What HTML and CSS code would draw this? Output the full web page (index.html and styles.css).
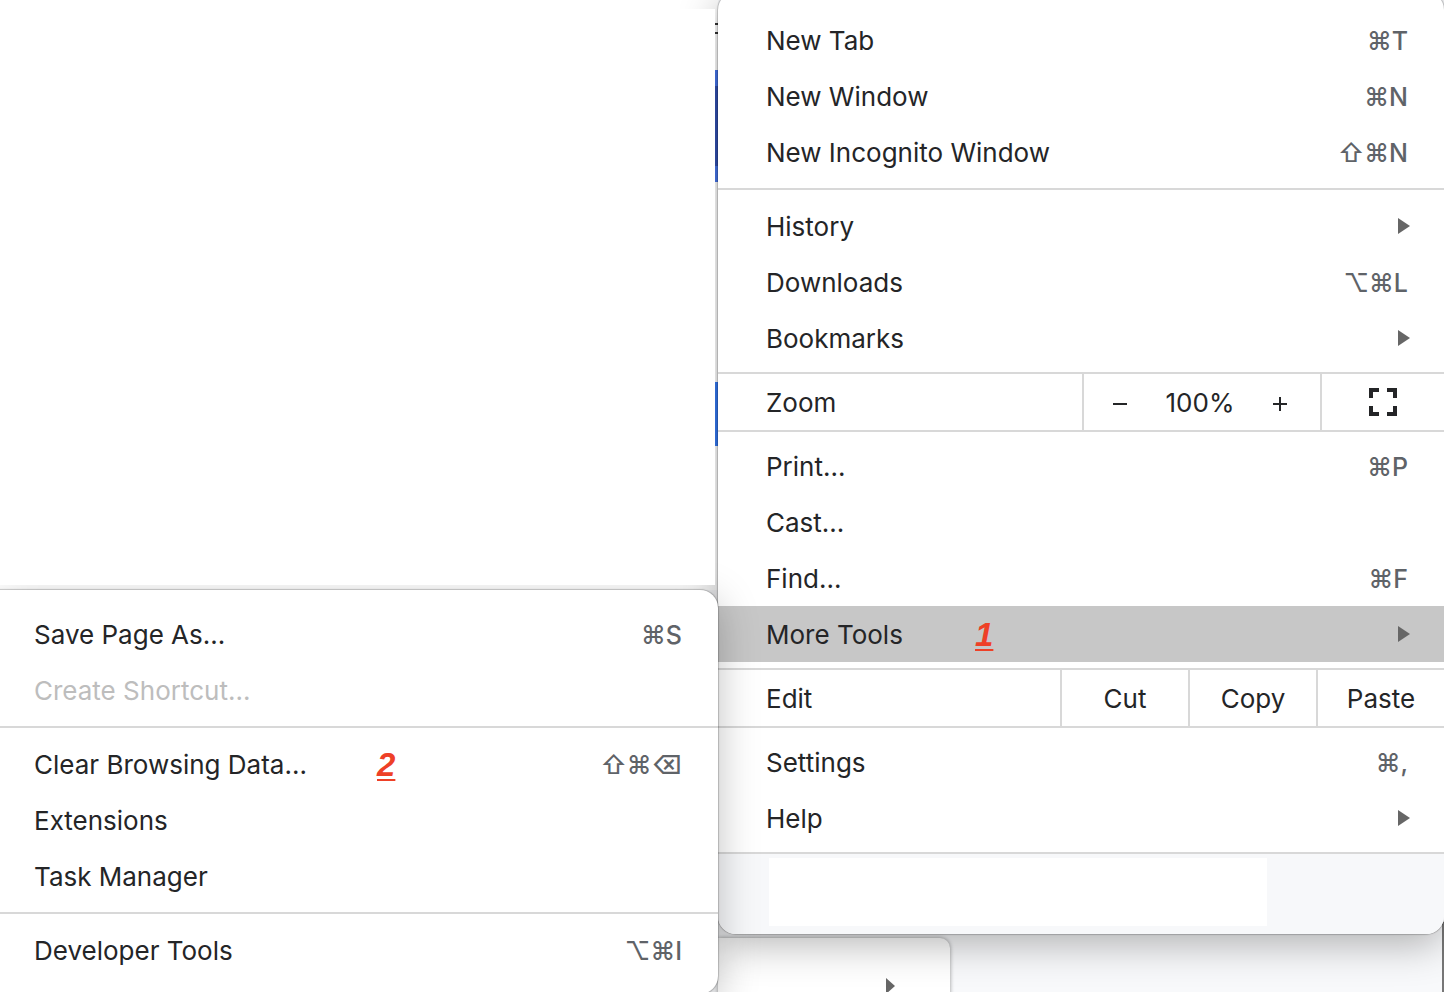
FILE: index.html
```html
<!DOCTYPE html>
<html lang="en">
<head>
  <meta charset="UTF-8">
  <title>Clear Browsing Data</title>
  <meta name="viewport" content="width=device-width, initial-scale=1.0">
  <link rel="stylesheet" href="styles.css">
</head>
<body>

  <div class="page">
    <div class="left">
      <div class="backdrop">
        <div class="blank"></div>
        <div class="edge"></div>
      </div>

      <div class="menu submenu" role="menu" aria-label="More Tools">
        <button class="item" type="button">Save Page As... <span class="keys">⌘S</span></button>
        <button class="item" type="button" disabled>Create Shortcut...</button>
        <hr class="line">
        <button class="item" type="button">Clear Browsing Data... <span class="step step-two">2</span> <span class="keys">⇧⌘⌫</span></button>
        <button class="item" type="button">Extensions</button>
        <button class="item" type="button">Task Manager</button>
        <hr class="line">
        <button class="item" type="button">Developer Tools <span class="keys">⌥⌘I</span></button>
      </div>
    </div>

    <div class="right">
      <div class="menu main-menu" role="menu" aria-label="Browser menu">
        <button class="item" type="button">New Tab <span class="keys">⌘T</span></button>
        <button class="item" type="button">New Window <span class="keys">⌘N</span></button>
        <button class="item" type="button">New Incognito Window <span class="keys">⇧⌘N</span></button>
        <hr class="line">
        <button class="item" type="button">History <span class="arrow"></span></button>
        <button class="item" type="button">Downloads <span class="keys">⌥⌘L</span></button>
        <button class="item" type="button">Bookmarks <span class="arrow"></span></button>

        <div class="tools">
          <span class="tools-label">Zoom</span>
          <div class="zoom">
            <button type="button" aria-label="Zoom out">
              <svg width="16" height="16" viewBox="0 0 16 16"><path d="M1 9h14" stroke="#242527" stroke-width="2"/></svg>
            </button>
            <span class="zoom-value">100%</span>
            <button type="button" aria-label="Zoom in">
              <svg width="16" height="16" viewBox="0 0 16 16"><path d="M1 9h14M8 2v14" stroke="#242527" stroke-width="2"/></svg>
            </button>
          </div>
          <button class="fullscreen" type="button" aria-label="Full screen">
            <svg width="28" height="28" viewBox="0 0 28 28" fill="none" stroke="#242527" stroke-width="4">
              <path d="M2 10V2h8M18 2h8v8M26 18v8h-8M10 26H2v-8"/>
            </svg>
          </button>
        </div>

        <button class="item" type="button">Print... <span class="keys">⌘P</span></button>
        <button class="item" type="button">Cast...</button>
        <button class="item" type="button">Find... <span class="keys">⌘F</span></button>
        <button class="item active" type="button">More Tools <span class="step step-one">1</span> <span class="arrow"></span></button>

        <div class="tools">
          <span class="tools-label">Edit</span>
          <button class="edit" type="button">Cut</button>
          <button class="edit" type="button">Copy</button>
          <button class="edit" type="button">Paste</button>
        </div>

        <button class="item" type="button">Settings <span class="keys">⌘,</span></button>
        <button class="item" type="button">Help <span class="arrow"></span></button>
        <div class="managed"><div class="managed-text"></div></div>
      </div>

      <div class="under">
        <div class="popup"><span class="arrow"></span></div>
      </div>
    </div>
  </div>

</body>
</html>
```
FILE: styles.css
```css
* {
  box-sizing: border-box;
}

body {
  margin: 0;
  font-family: Inter, "Liberation Sans", sans-serif;
  font-size: 26px;
  line-height: 32px;
  color: #242527;
  background: #f8f9fb;
}

button {
  font: inherit;
  color: inherit;
  background: none;
  border: none;
  padding: 0;
  cursor: pointer;
}

svg {
  display: block;
}

.page {
  display: grid;
  grid-template-columns: 718fr 726fr;
  height: 100vh;
  overflow: hidden;
}

.left,
.right {
  display: flex;
  flex-direction: column;
  min-width: 0;
}

/* page behind the menus */
.backdrop {
  display: flex;
  flex: none;
  height: 590px;
  background: #fff;
}

.blank {
  position: relative;
  z-index: 4;
  flex: 1;
  margin: 9px 0 5px;
  background: #fff;
}

.edge {
  width: 3px;
  background: linear-gradient(
    #fff 23px, #333 23px 25px, #fff 25px 32px, #333 32px 34px,
    #fff 34px 70px, #4674e8 70px 86px, #3150b0 86px 166px,
    #4674e8 166px 182px, #fff 182px 382px, #3478f0 382px 446px, #fff 446px
  );
}

.menu {
  position: relative;
  flex: none;
  background: #fff;
}

.main-menu {
  z-index: 1;
  margin-top: -8px;
  padding-top: 20px;
  border-radius: 18px;
  box-shadow: 0 0 1px 1px rgba(0, 0, 0, 0.2), 0 10px 40px rgba(0, 0, 0, 0.3);
}

.submenu {
  z-index: 3;
  padding: 16px 0;
  border-radius: 0 18px 18px 0;
  box-shadow: 0 0 1px 1px rgba(0, 0, 0, 0.2), 0 10px 40px rgba(0, 0, 0, 0.25);
}

.item {
  position: relative;
  display: flex;
  align-items: center;
  justify-content: space-between;
  width: 100%;
  height: 56px;
  padding: 2px 36px 0 48px;
  text-align: left;
}

.submenu .item {
  padding-left: 34px;
}

.item:hover,
.active {
  background: #c7c7c7;
}

.item:disabled {
  color: #bdbdbd;
  background: none;
  cursor: default;
}

.keys {
  font-size: 25px;
  font-weight: 500;
  color: #5f6368;
}

.arrow {
  width: 12px;
  height: 16px;
  background: #666;
  clip-path: polygon(0 0, 100% 50%, 0 100%);
}

.item .arrow {
  margin: 0 -2px 2px 0;
}

.line {
  height: 2px;
  margin: 8px 0;
  border: none;
  background: #d8d8d8;
}

/* red step numbers on top of the menus */
.step {
  position: absolute;
  font: italic bold 33px/36px "Liberation Sans", Arial, sans-serif;
  color: #ee4027;
  text-decoration: underline;
  text-decoration-thickness: 2px;
  text-decoration-skip-ink: none;
  text-underline-offset: 3px;
}

.step-one {
  left: 257px;
}

.step-two {
  left: 377px;
}

.tools {
  display: flex;
  height: 60px;
  margin: 6px 0;
  border-top: 2px solid #d8d8d8;
  border-bottom: 2px solid #d8d8d8;
}

.tools-label {
  flex: 1;
  padding-left: 48px;
  line-height: 58px;
}

.zoom {
  display: flex;
  align-items: center;
  justify-content: space-between;
  width: 238px;
  padding: 2px 32px 0 28px;
  border-left: 2px solid #d8d8d8;
}

.fullscreen {
  display: flex;
  align-items: center;
  justify-content: center;
  width: 124px;
  border-left: 2px solid #d8d8d8;
}

.edit {
  width: 128px;
  padding-top: 2px;
  border-left: 2px solid #d8d8d8;
}

.managed {
  height: 82px;
  margin-top: 6px;
  padding: 4px 177px 8px 51px;
  border-top: 2px solid #d8d8d8;
  border-radius: 0 0 18px 18px;
  background: #f7f8fa;
}

.managed-text {
  height: 100%;
  background: #fff;
}

.under {
  flex: 1;
  margin-top: -12px;
  padding-top: 16px;
  border-right: 2px solid #777;
}

.popup {
  display: flex;
  justify-content: flex-end;
  width: 232px;
  height: 100px;
  padding: 40px 55px 0 0;
  border-radius: 0 10px 0 0;
  background: #fff;
  box-shadow: 0 0 4px rgba(0, 0, 0, 0.4);
}

.popup .arrow {
  width: 9px;
}
```
